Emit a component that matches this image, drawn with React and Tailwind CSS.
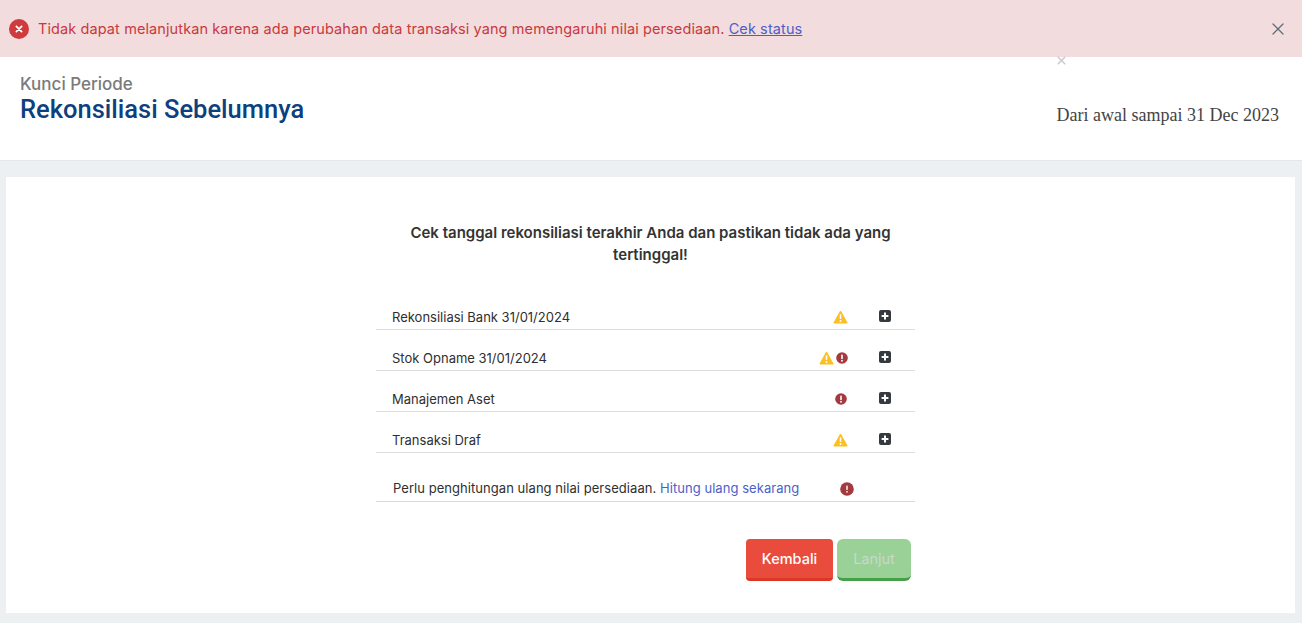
import React from "react";
import { X } from "lucide-react";

const Warn = () => (
  <svg width="15" height="14" viewBox="0 0 15 14" className="block">
    <path d="M7.5 1 L14.2 13 H0.8 Z" fill="#fbbf24" stroke="#fbbf24" strokeWidth="1" strokeLinejoin="round" />
    <rect x="6.7" y="4.2" width="1.6" height="4.8" rx="0.6" fill="#fff" />
    <circle cx="7.5" cy="10.9" r="1" fill="#fff" />
  </svg>
);
const Err = () => (
  <svg width="12" height="12" viewBox="0 0 12 12" className="block">
    <circle cx="6" cy="6" r="5.8" fill="#a23a3f" />
    <rect x="5.2" y="2.4" width="1.6" height="4.6" rx="0.6" fill="#fff" />
    <circle cx="6" cy="8.8" r="0.95" fill="#fff" />
  </svg>
);
const Plus = () => (
  <svg width="12" height="12" viewBox="0 0 12 12" className="block">
    <rect width="12" height="12" rx="2" fill="#343a40" />
    <path d="M6 2.6 V9.4 M2.6 6 H9.4" stroke="#fff" strokeWidth="2" />
  </svg>
);

const rows = [
  { label: "Rekonsiliasi Bank 31/01/2024", warn: true, err: false },
  { label: "Stok Opname 31/01/2024", warn: true, err: true },
  { label: "Manajemen Aset", warn: false, err: true },
  { label: "Transaksi Draf", warn: true, err: false },
];

function Row({ label, warn, err, i }) {
  return (
    <div className="flex h-[41px] items-end border-b border-[#dcdfe2] pb-[2px] pl-4 text-[13px] leading-[20px] text-[#2f2f2f]">
      <span className="flex-1">{label}</span>
      <span className="flex h-[20px] w-[60px] items-center justify-end gap-[2px]">
        {warn && <Warn />}
        {err && (
          <span className={warn ? "" : "mr-[1px]"}>
            <Err />
          </span>
        )}
      </span>
      <span className="flex h-[20px] w-[67px] items-center justify-center pl-[7px] pb-[2px]">
        <Plus />
      </span>
    </div>
  );
}

export default function App() {
  return (
    <div className="relative flex h-[623px] flex-col overflow-hidden bg-[#ecf0f1] font-['Inter',sans-serif]">
      <div className="flex h-[57px] shrink-0 items-center bg-[#f2dcde] pl-[9px] pr-[14px]">
        <svg width="20" height="20" viewBox="0 0 20 20" className="shrink-0">
          <circle cx="10" cy="10" r="10" fill="#cf3a3c" />
          <path d="M7.4 7.4 L12.6 12.6 M12.6 7.4 L7.4 12.6" stroke="#fff" strokeWidth="1.8" strokeLinecap="round" />
        </svg>
        <p className="ml-[9px] flex-1 text-[14.5px] tracking-[0.1px] text-[#c9393d]">
          Tidak dapat melanjutkan karena ada perubahan data transaksi yang memengaruhi nilai persediaan.{" "}
          <a className="text-[#4c5fc9] underline">Cek status</a>
        </p>
        <X size={20} strokeWidth={1.5} className="text-[#5f6b7a]" />
      </div>

      <div className="relative flex h-[104px] shrink-0 items-start justify-between border-b border-[#e4e7e9] bg-white pl-5 pr-[23px]">
        <div className="pt-[17px]">
          <div className="text-[17px] font-medium leading-[20px] text-[#7a7a7a]">Kunci Periode</div>
          <h1 className="font-['Roboto',sans-serif] text-[25.5px] font-medium leading-[30px] text-[#0e3f7e]">
            Rekonsiliasi Sebelumnya
          </h1>
        </div>
        <div className="pt-[47px] font-['Liberation_Serif',serif] text-[18px] leading-[22px] text-[#444]">
          Dari awal sampai 31 Dec 2023
        </div>
        <X size={13} strokeWidth={3} className="absolute left-[1055px] top-[-3px] text-[#cccccc]" />
      </div>

      <div className="flex-1 px-[6px] pb-[10px] pt-4 pr-[7px]">
        <div className="flex h-full flex-col items-center bg-white pt-[45px]">
          <h2 className="w-[520px] text-center text-[15px] font-semibold leading-[22px] text-[#333]">
            Cek tanggal rekonsiliasi terakhir Anda dan pastikan tidak ada yang tertinggal!
          </h2>
          <div className="ml-[0px] mt-[23px] w-[539px] -translate-x-[5px]">
            {rows.map((r, i) => (
              <Row key={r.label} i={i} {...r} />
            ))}
            <div className="flex h-[49px] items-end border-b border-[#d5dae0] pb-[3px] pl-[17px] text-[13px] leading-[20px] text-[#2f2f2f]">
              <span className="flex-1 tracking-[0.05px]">
                Perlu penghitungan ulang nilai persediaan.{" "}
                <a className="text-[#4c5fc9]">Hitung ulang sekarang</a>
              </span>
              <span className="mb-[2px] mr-[61px]">
                <Svg14 />
              </span>
            </div>
          </div>
          <div className="mt-[37px] flex w-[539px] -translate-x-[5px] justify-end gap-1 pr-1">
            <button className="h-[42px] w-[87px] rounded-[4px] border-b-[3px] border-[#dc3626] bg-[#e94b3c] text-[14.5px] font-medium text-white">
              Kembali
            </button>
            <button className="h-[42px] w-[74px] rounded-[6px] border-b-[3px] border-[#46a04a] bg-[#9ad197] text-[14.5px] text-[#c8d8cc]">
              Lanjut
            </button>
          </div>
        </div>
      </div>
    </div>
  );
}

function Svg14() {
  return (
    <svg width="14" height="14" viewBox="0 0 14 14" className="block">
      <circle cx="7" cy="7" r="6.8" fill="#a23a3f" />
      <rect x="6.3" y="3.4" width="1.4" height="4.6" rx="0.6" fill="#fff" />
      <circle cx="7" cy="9.8" r="0.85" fill="#fff" />
    </svg>
  );
}
